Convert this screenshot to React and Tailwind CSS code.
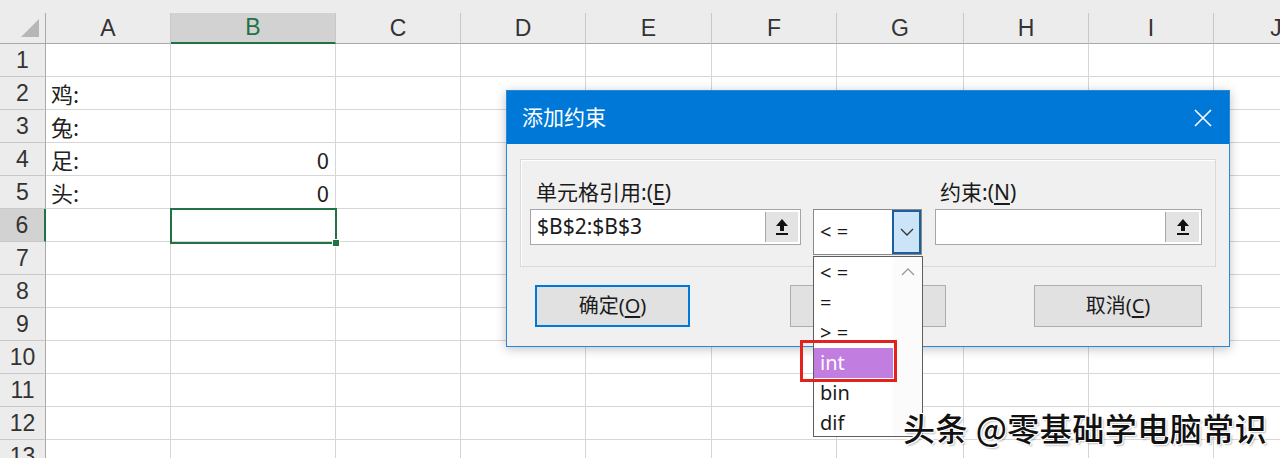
import React from "react";

const COLS = [
  { key: "A", w: "w-[125px]" },
  { key: "B", w: "w-[165px]" },
  { key: "C", w: "w-[125px]" },
  { key: "D", w: "w-[125px]" },
  { key: "E", w: "w-[126px]" },
  { key: "F", w: "w-[125px]" },
  { key: "G", w: "w-[127px]" },
  { key: "H", w: "w-[125px]" },
  { key: "I", w: "w-[125px]" },
  { key: "J", w: "w-[125px]" },
];

const CELLS = {
  A2: "鸡:",
  A3: "兔:",
  A4: "足:",
  A5: "头:",
  B4: "0",
  B5: "0",
};

const ROWS = [1, 2, 3, 4, 5, 6, 7, 8, 9, 10, 11, 12, 13];

function UploadIcon() {
  return (
    <svg width="16" height="18" viewBox="0 0 16 18">
      <path d="M8 1 L14 8 L10 8 L10 13 L6 13 L6 8 L2 8 Z" fill="#111" />
      <rect x="2" y="15" width="12" height="2" fill="#111" />
    </svg>
  );
}

function RefInput({ value, inputW }) {
  return (
    <div className="flex h-[36px] border border-[#a6a6a6] bg-white">
      <div className={`${inputW} flex items-center pl-[6px] text-[21px] text-[#1a1a1a]`}>{value}</div>
      <div className="m-[2px] ml-0 flex flex-1 items-center justify-center border-l border-[#a6a6a6] bg-[#e3e3e3]">
        <UploadIcon />
      </div>
    </div>
  );
}

function Under({ children }) {
  return <span className="underline underline-offset-[3px]">{children}</span>;
}

function Dialog() {
  return (
    <div className="absolute left-[506px] top-[90px] h-[257px] w-[724px] border border-[#2a86d6] bg-[#f0f0f0] shadow-[0_2px_10px_rgba(0,0,0,0.25)] [font-family:'Noto_Sans','Noto_Sans_CJK_SC',sans-serif]">
      <div className="flex h-[53px] items-center justify-between bg-[#0078d7] pl-[15px] pr-[17px]">
        <span className="text-[21px] text-white">添加约束</span>
        <svg width="18" height="18" viewBox="0 0 18 18">
          <path d="M1 1 L17 17 M17 1 L1 17" stroke="#fff" strokeWidth="1.6" />
        </svg>
      </div>

      <div className="mx-[13px] mt-[15px] h-[108px] border border-[#d9d9d9] pt-[19px] shadow-[inset_1px_1px_0_#ffffff]">
        <div className="flex items-start">
          <div className="ml-[9px] w-[271px]">
            <div className="h-[30px] pl-[6px] text-[21px] leading-[26px] text-[#1a1a1a]">
              单元格引用:(<Under>E</Under>)
            </div>
            <RefInput value="$B$2:$B$3" inputW="w-[234px]" />
          </div>

          <div className="ml-[12px] mt-[30px] flex h-[46px] w-[109px] border border-[#8a8a8a] bg-white">
            <div className="flex flex-1 items-center pl-[6px] text-[20px] text-[#1a1a1a]">&lt; =</div>
            <div className="flex w-[29px] items-center justify-center border-2 border-[#1c5f9c] bg-[#cce4f7]">
              <svg width="14" height="8" viewBox="0 0 14 8">
                <path d="M1 1 L7 7 L13 1" stroke="#333" strokeWidth="1.3" fill="none" />
              </svg>
            </div>
          </div>

          <div className="ml-[13px] w-[267px]">
            <div className="h-[30px] pl-[5px] text-[21px] leading-[26px] text-[#1a1a1a]">
              约束:(<Under>N</Under>)
            </div>
            <RefInput value="" inputW="w-[229px]" />
          </div>
        </div>
      </div>

      <div className="mt-[18px] flex">
        <div className="ml-[28px] flex h-[42px] w-[155px] items-center justify-center border-2 border-[#0078d7] bg-[#e1e1e1] text-[20px] text-[#1a1a1a]">
          确定(<Under>O</Under>)
        </div>
        <div className="ml-[100px] h-[42px] w-[156px] border border-[#adadad] bg-[#e1e1e1]" />
        <div className="ml-[88px] flex h-[42px] w-[168px] items-center justify-center border border-[#adadad] bg-[#e1e1e1] text-[20px] text-[#1a1a1a]">
          取消(<Under>C</Under>)
        </div>
      </div>
    </div>
  );
}

function DropList() {
  const items = ["< =", "=", "> =", "int", "bin", "dif"];
  return (
    <div className="absolute left-[813px] top-[256px] flex h-[181px] w-[110px] border border-[#5e5e5e] bg-white [font-family:'Noto_Sans','Noto_Sans_CJK_SC',sans-serif]">
      <div className="w-[79px] pt-[1px]">
        {items.map((t) => (
          <div
            key={t}
            className={`flex h-[30px] items-center pl-[6px] text-[20px] ${
              t === "int" ? "bg-[#c27de0] text-white" : "text-[#1a1a1a]"
            }`}
          >
            {t}
          </div>
        ))}
      </div>
      <div className="flex flex-1 justify-center bg-[#fbfbfb] pt-[11px]">
        <svg width="14" height="8" viewBox="0 0 14 8">
          <path d="M1 7 L7 1 L13 7" stroke="#9a9a9a" strokeWidth="1.3" fill="none" />
        </svg>
      </div>
    </div>
  );
}

export default function App() {
  return (
    <div className="relative h-[458px] w-[1280px] overflow-hidden bg-white [font-family:'Liberation_Sans','Noto_Sans_CJK_SC',sans-serif]">
      <div className="h-[13px] bg-[#ececec]" />

      {/* column headers */}
      <div className="flex h-[31px] bg-[#ececec]">
        <div className="flex w-[46px] shrink-0 items-end justify-end border-r border-b border-[#a9a9a9] pr-[6px] pb-[6px]">
          <svg width="18" height="18" viewBox="0 0 18 18">
            <path d="M18 0 L18 18 L0 18 Z" fill="#b7b7b7" />
          </svg>
        </div>
        {COLS.map((c) => (
          <div
            key={c.key}
            className={`${c.w} flex shrink-0 items-center justify-center border-r border-[#c8c8c8] text-[23px] ${
              c.key === "B"
                ? "border-b-2 border-b-[#217346] bg-[#d2d2d2] text-[#217346]"
                : "border-b border-b-[#a9a9a9] text-[#333]"
            }`}
          >
            {c.key}
          </div>
        ))}
      </div>

      {/* rows */}
      {ROWS.map((r) => (
        <div key={r} className="flex h-[33px]">
          <div
            className={`flex w-[46px] shrink-0 items-center justify-center border-b border-[#c8c8c8] text-[23px] text-[#333] ${
              r === 6 ? "border-r-2 border-r-[#217346] bg-[#d2d2d2]" : "border-r border-r-[#a9a9a9] bg-[#ececec]"
            }`}
          >
            {r}
          </div>
          {COLS.map((c) => {
            const v = CELLS[c.key + r];
            const isNum = v && /^\d+$/.test(v);
            return (
              <div
                key={c.key}
                className={`${c.w} flex shrink-0 items-center border-r border-b border-[#d6d6d6] text-[22px] text-[#222] ${
                  isNum ? "justify-end pr-[6px]" : "pl-[5px]"
                } [font-family:'Noto_Sans_CJK_SC',sans-serif]`}
              >
                {v}
              </div>
            );
          })}
        </div>
      ))}

      {/* active cell B6 */}
      <div className="absolute left-[170px] top-[208px] h-[36px] w-[167px] border-2 border-[#217346]">
        <div className="absolute -right-[5px] -bottom-[5px] h-[8px] w-[8px] border border-white bg-[#217346]" />
      </div>

      <Dialog />
      <DropList />

      <div className="absolute left-[800px] top-[340px] h-[42px] w-[97px] border-[3px] border-[#e3221c]" />

      <div className="absolute left-[903px] top-[403px] text-[32px] font-medium tracking-[0.5px] text-[#111] [font-family:'Noto_Sans_CJK_SC',sans-serif] [text-shadow:1px_1px_0_#fff,-1px_-1px_0_#fff,1px_-1px_0_#fff,-1px_1px_0_#fff,2px_2px_2px_rgba(0,0,0,0.25)]">
        头条 @零基础学电脑常识
      </div>
    </div>
  );
}
